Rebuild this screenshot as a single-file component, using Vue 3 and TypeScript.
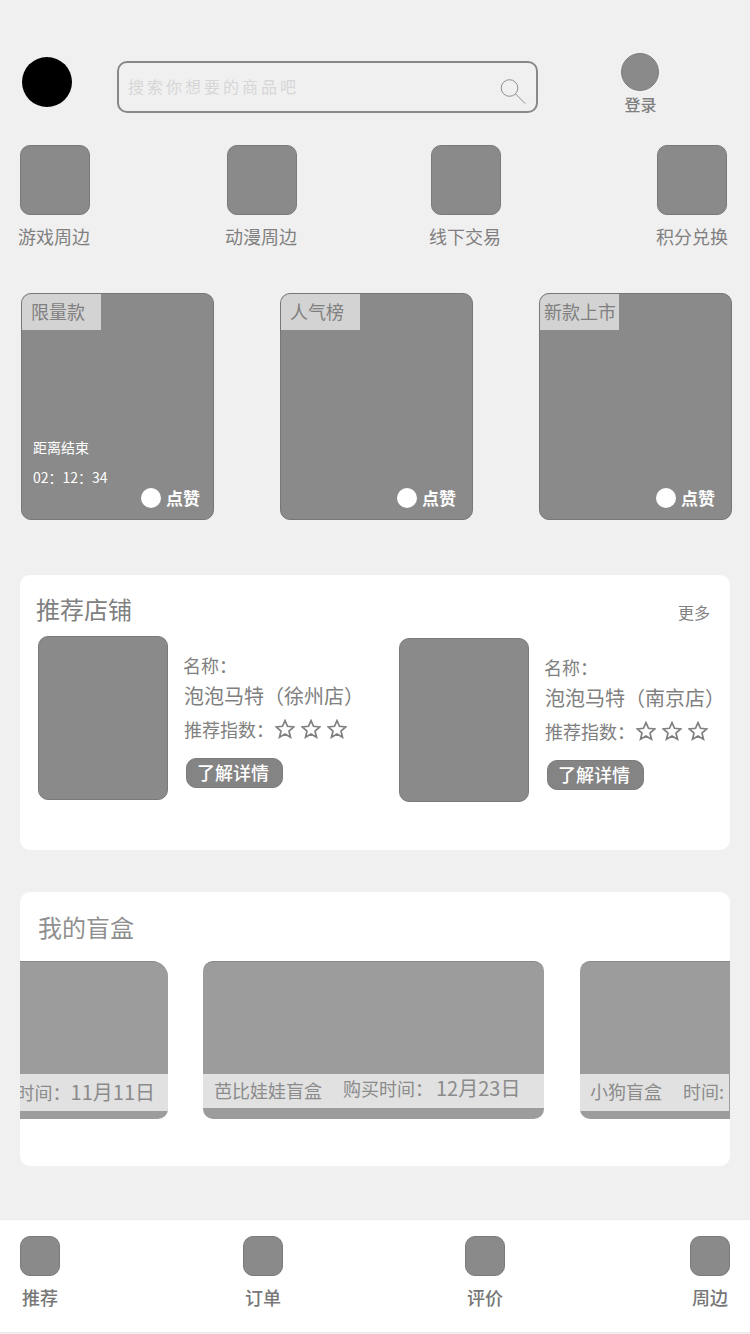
<script setup lang="ts">
const cats = [
  { label: '游戏周边', width: 207 },
  { label: '动漫周边', width: 204 },
  { label: '线下交易', width: 227 },
  { label: '积分兑换', width: 72 },
]
const promos = [
  { tag: '限量款', timer: true, cls: 'first' },
  { tag: '人气榜', timer: false, cls: '' },
  { tag: '新款上市', timer: false, cls: 'tight' },
]
const shops = [
  { name: '泡泡马特（徐州店）', cls: '' },
  { name: '泡泡马特（南京店）', cls: 'lower' },
]
const navs = [
  { label: '推荐', width: 223 },
  { label: '订单', width: 222 },
  { label: '评价', width: 225 },
  { label: '周边', width: 40 },
]
</script>

<template>
  <div class="page">
    <header class="top">
      <div class="avatar"></div>
      <div class="search">
        <span class="placeholder">搜索你想要的商品吧</span>
        <svg class="search-icon" width="28" height="28" viewBox="0 0 28 28" fill="none" stroke="#8f8f8f" stroke-width="1">
          <circle cx="10.5" cy="10" r="8.3" />
          <path d="M16.6 16 L26.2 25.6" />
        </svg>
      </div>
      <div class="login">
        <div class="login-dot"></div>
        <span>登录</span>
      </div>
    </header>

    <nav class="cats">
      <div v-for="c in cats" :key="c.label" class="cat" :style="{ width: c.width + 'px' }">
        <div class="cat-icon"></div>
        <span class="cat-label">{{ c.label }}</span>
      </div>
    </nav>

    <section class="promos">
      <article v-for="p in promos" :key="p.tag" class="promo" :class="p.cls">
        <div class="promo-tag">{{ p.tag }}</div>
        <div class="promo-fill"></div>
        <div v-if="p.timer" class="timer">
          <span>距离结束</span>
          <span>02：12：34</span>
        </div>
        <div class="like"><i></i><span>点赞</span></div>
      </article>
    </section>

    <section class="panel shops-panel">
      <div class="panel-head">
        <h2>推荐店铺</h2>
        <span class="more">更多</span>
      </div>
      <div class="shops">
        <div v-for="s in shops" :key="s.name" class="shop" :class="s.cls">
          <div class="shop-pic"></div>
          <div class="shop-info">
            <div class="shop-key">名称：</div>
            <div class="shop-name">{{ s.name }}</div>
            <div class="shop-rate">
              <span>推荐指数：</span>
              <svg v-for="n in 3" :key="n" width="20" height="20" viewBox="0 0 20 20" fill="none" stroke="#808080" stroke-width="1.7" stroke-linejoin="miter">
                <path d="M10 1.6 L12.5 7.3 L18.8 7.9 L14 12 L15.5 18.2 L10 15 L4.5 18.2 L6 12 L1.2 7.9 L7.5 7.3 Z" />
              </svg>
            </div>
            <button class="shop-btn">了解详情</button>
          </div>
        </div>
      </div>
    </section>

    <section class="panel boxes-panel">
      <h2 class="boxes-title">我的盲盒</h2>
      <div class="boxes">
        <div class="box box-left">
          <div class="strip strip-end"><span>时间：</span><span class="date">11月11日</span></div>
        </div>
        <div class="box box-mid">
          <div class="strip"><span>芭比娃娃盲盒</span><span class="bought">购买时间：<span class="date">12月23日</span></span></div>
        </div>
        <div class="box box-right">
          <div class="strip"><span>小狗盲盒</span><span>时间:</span></div>
        </div>
      </div>
    </section>

    <footer class="tabbar">
      <div v-for="n in navs" :key="n.label" class="tab" :style="{ width: n.width + 'px' }">
        <div class="tab-icon"></div>
        <span class="tab-label">{{ n.label }}</span>
      </div>
    </footer>
  </div>
</template>

<style>
html, body { margin: 0; background: #f1f0f1; }
</style>

<style scoped>
* { box-sizing: border-box; }
.page {
  width: 750px;
  height: 1334px;
  overflow: hidden;
  background: #f1f0f1;
  color: #808080;
  font-family: "Noto Sans CJK SC", "Noto Sans", sans-serif;
  padding-top: 53px;
}
.top { display: flex; height: 62px; padding-left: 22px; }
.avatar { width: 50px; height: 50px; margin-top: 4px; border-radius: 50%; background: #000; }
.search {
  width: 421px; height: 52px; margin: 8px 0 0 45px;
  border: 2px solid #888; border-radius: 10px;
  display: flex; align-items: center; justify-content: space-between;
  padding: 0 9px 2px 9px;
}
.placeholder { font-size: 16px; letter-spacing: 3px; color: #d6d6d6; line-height: 20px; }
.search-icon { margin-top: 11px; }
.login { margin-left: 83px; width: 38px; display: flex; flex-direction: column; align-items: center; }
.login-dot { width: 38px; height: 38px; flex: none; border-radius: 50%; background: #8a8a8a; border: 1px solid #7d7d7d; }
.login span { font-size: 16px; line-height: 24px; margin: 1px 0 0 1px; white-space: nowrap; font-weight: 500; }

.cats { display: flex; margin-top: 30px; padding-left: 18px; }
.cat { flex: none; display: flex; flex-direction: column; align-items: flex-start; }
.cat-icon { width: 70px; height: 70px; margin-left: 2px; border-radius: 10px; background: #8a8a8a; border: 1px solid #7a7a7a; }
.cat:last-child .cat-icon { margin-left: 1px; }
.cat-label { font-size: 18px; line-height: 26px; margin-top: 8px; white-space: nowrap; }

.promos { display: flex; gap: 66px; margin-top: 44px; padding-left: 21px; }
.promo {
  width: 193px; height: 227px; flex: none;
  display: flex; flex-direction: column;
  background: #8a8a8a; border: 1px solid #777; border-radius: 10px; overflow: hidden;
  padding-bottom: 11px;
}
.promo-tag {
  width: 79px; height: 36px; flex: none;
  background: #d3d3d3; color: #808080;
  font-size: 18px; line-height: 34px; padding-left: 9px; white-space: nowrap;
}
.promo.tight .promo-tag { padding-left: 4px; }
.promo-fill { flex: 1; }
.timer { display: flex; flex-direction: column; padding-left: 11px; color: #fff; font-size: 14px; line-height: 20px; gap: 10px; margin-bottom: 1px; }
.like { align-self: flex-end; display: flex; align-items: center; gap: 5px; padding-right: 16px; color: #fff; font-size: 17px; line-height: 20px; font-weight: 700; }
.promo.first .like { padding-right: 13px; }
.like i { width: 20px; height: 20px; border-radius: 50%; background: #fff; }

.panel { background: #fff; border-radius: 10px; margin-left: 20px; width: 710px; }
.shops-panel { height: 275px; margin-top: 55px; padding: 14px 0 0 16px; }
.panel-head { display: flex; justify-content: space-between; align-items: center; padding-right: 20px; height: 39px; }
h2 { margin: 0; font-size: 24px; font-weight: 400; line-height: 36px; color: #808080; }
.more { font-size: 16px; line-height: 24px; margin-top: 6px; }
.shops { display: flex; margin-top: 8px; padding-left: 2px; gap: 32px; align-items: flex-start; }
.shop { display: flex; width: 329px; flex: none; }
.shop.lower { margin-top: 2px; }
.shop-pic { width: 130px; height: 164px; flex: none; background: #8a8a8a; border: 1px solid #7a7a7a; border-radius: 10px; }
.shop-info { margin-left: 15px; padding-top: 16px; white-space: nowrap; }
.shop-key { font-size: 18px; line-height: 26px; }
.shop-name { font-size: 20px; line-height: 28px; margin: 4px 0 0 1px; }
.shop-rate { display: flex; align-items: center; gap: 6px; font-size: 18px; line-height: 26px; margin: 6px 0 0 1px; }
.shop-rate span { margin-right: -5px; }
.shop-btn {
  display: block; width: 97px; height: 30px; margin: 16px 0 0 3px; padding: 0 3px 2px 0;
  border: 1px solid #7c7c7c; border-radius: 10px; background: #848484; color: #fff;
  font: 500 18px/26px "Noto Sans CJK SC", sans-serif;
}

.boxes-panel { height: 274px; margin-top: 42px; padding-top: 17px; overflow: hidden; }
.boxes-title { padding-left: 18px; color: #8f8f8f; }
.boxes { display: flex; margin-top: 16px; overflow: hidden; }
.box {
  height: 158px; flex: none; background: #9c9c9c;
  border-top: 1px solid #888; border-radius: 10px; overflow: hidden;
  padding-top: 112px;
}
.box-left { width: 341px; margin-left: -193px; border-radius: 10px 16px 10px 10px; }
.box-mid { width: 341px; margin-left: 35px; }
.box-mid .strip { height: 34px; gap: 21px; padding-left: 11px; }
.box-right { width: 341px; margin-left: 36px; }
.box-right .strip { width: 149px; gap: 21px; }
.strip {
  height: 37px; background: #e1e1e1; color: #8b8b8b;
  display: flex; align-items: center; padding: 0 0 3px 10px;
  font-size: 18px; line-height: 26px; white-space: nowrap; overflow: hidden;
}
.strip-end { justify-content: flex-end; padding: 0 13px 2px 0; }
.date { font-size: 20px; }
.bought { margin-bottom: 3px; }
.bought .date { margin-left: 3px; }

.tabbar {
  display: flex; height: 114px; margin-top: 53px; padding: 16px 0 0 20px;
  background: #fff; border-top: 1px solid #ebebeb; border-bottom: 1px solid #ebebeb;
}
.tab { flex: none; display: flex; flex-direction: column; align-items: flex-start; }
.tab-icon { width: 40px; height: 40px; border-radius: 10px; background: #8a8a8a; border: 1px solid #7a7a7a; }
.tab-label { width: 40px; text-align: center; font-size: 18px; line-height: 26px; margin-top: 8px; white-space: nowrap; font-weight: 500; color: #777; }
</style>
